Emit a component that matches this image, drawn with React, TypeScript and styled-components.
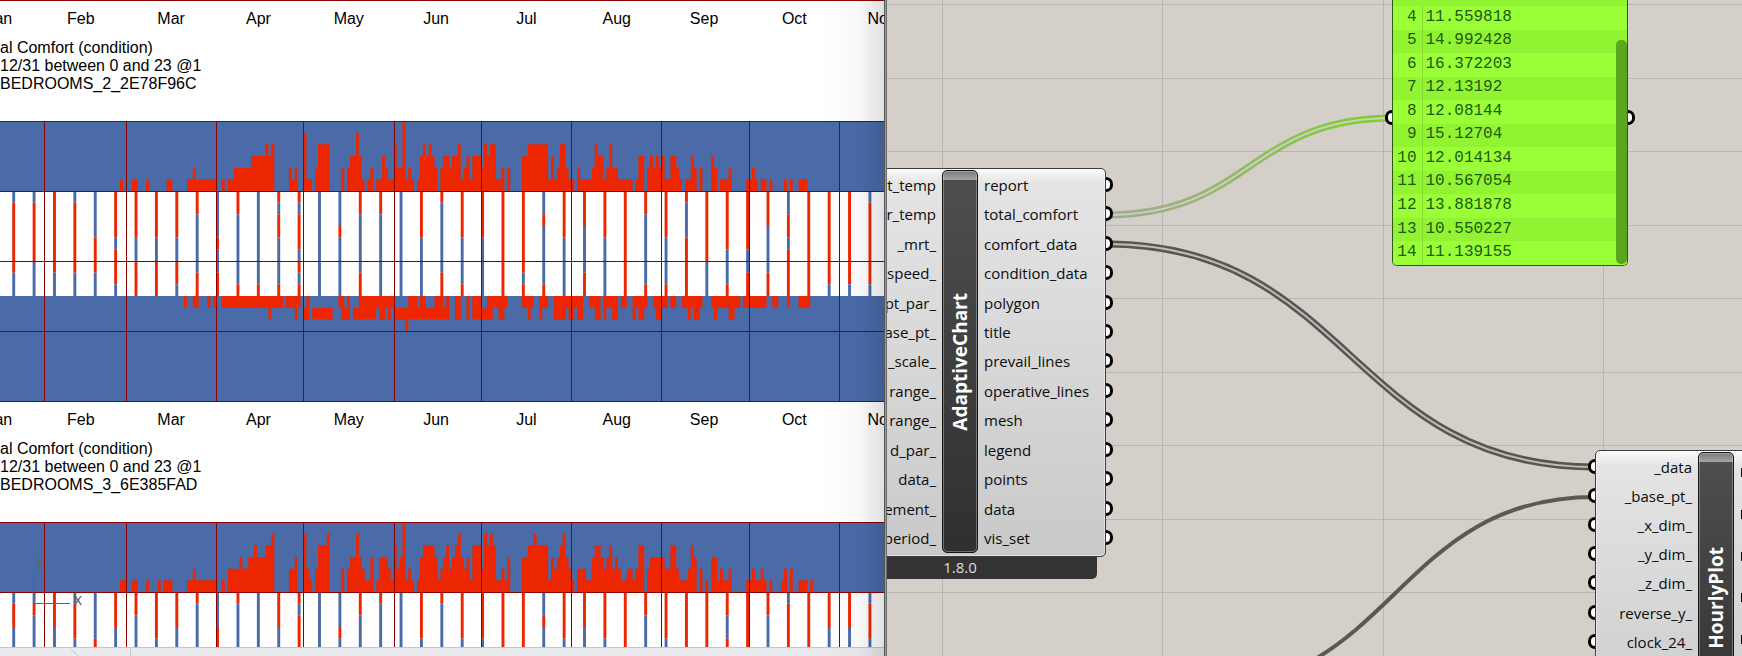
import React from "react";
import styled, { createGlobalStyle } from "styled-components";

const GlobalStyle = createGlobalStyle`
  * { box-sizing: border-box; }
  body { margin: 0; background: #d4cfc8; }
`;

const BLUE = "#4a6ba8";
const RED = "#eb2600";
const RULE = "#8b0000";

/* ---------- Rhino viewport: hourly comfort charts ---------- */

const YEAR_DAYS = 365;
const CHART_WIDTH = 1063;
const CHART_HEIGHT = 280;
const DAY = CHART_WIDTH / YEAR_DAYS;
const HOUR = CHART_HEIGHT / 24;
const MIDDAY_TOP = 6 * HOUR;
const MIDDAY_BOTTOM = 15 * HOUR;

const MONTHS: [string, number][] = [
  ["Jan", 31], ["Feb", 28], ["Mar", 31], ["Apr", 30], ["May", 31], ["Jun", 30],
  ["Jul", 31], ["Aug", 31], ["Sep", 30], ["Oct", 31], ["Nov", 30], ["Dec", 31],
];

/* A run starts on a day of the year; each digit is that day's count of red hours. */
type Run = [number, string];
/* First day and day after the last one. */
type Span = [number, number];

interface Room {
  id: string;
  morning: Run[];
  /* Hours 6 to 15, one string for each seventh day, starting on day 20. */
  weekly: string[];
  evening: Span[][];
}

const ROOM_2: Room = {
  id: "BEDROOMS_2_2E78F96C",
  morning: [
    [57, "1"], [61, "11"], [66, "1"], [73, "11"], [80, "1121111111"], [92, "1"],
    [94, "1122222233333434"], [115, "212"], [120, "511"], [124, "24444"], [133, "2"],
    [135, "233531"], [142, "12"], [145, "1132114226121"], [159, "1343432"],
    [167, "2332334123133324344112"], [190, "2"], [195, "334444444131244211"],
    [214, "2111124331242211111"], [234, "133"], [238, "232323113321"], [251, "1132"],
    [256, "2"], [260, "32"], [263, "1112"], [272, "1121"], [277, "11"], [280, "1"],
    [285, "1"], [287, "1"], [290, "111"],
  ],
  weekly: [
    "BRRRRRRBB", "BRRRRRBBB", "RRRRRRRBB", "BRRRRRRBB", "BBBBRRRBB", "RRRRBRRRB",
    "RRRRBBRRR", "RRRRBBRRR", "RRRRBBRRB", "RRBBBBBRR", "BBBBRBBRR", "RRBBBBBBR",
    "BBBBBBBBR", "RBRRBBBBR", "RBRRRBRBR", "BBBBBBBBB", "BBBRBBBBB", "RRBBBBBRR",
    "RRBBBBBBB", "BBBBBBBBB", "RRRRBBBBB", "RBBBBBBRR", "RRRRBBBBR", "RRRRBBBBB",
    "RRRRRRRRR", "RRRRRRRBR", "BBRBBBBBR", "RRRRBBBBB", "RRRBBBBRR", "RRRRBBBBB",
    "RRRRRRRRR", "RRBBBBBBR", "RRRRBBBBR", "RBBBRRRRR", "RRRRRRBBB", "RRRRRBBBR",
    "RRRRRBBRR", "RRRBBBBRR", "BBRRBRRRR", "RRRRRRRRR", "RRRRRRRRB", "RRRRRRRRB",
    "BRRRRRRRB",
  ],
  evening: [
    [
      [79, 80], [82, 84], [87, 88], [89, 90], [92, 113], [114, 119], [121, 122],
      [132, 134], [135, 136], [139, 151], [156, 159], [160, 162], [165, 168], [169, 170],
      [172, 174], [176, 177], [178, 181], [183, 190], [195, 199], [201, 204], [206, 216],
      [218, 222], [223, 228], [229, 231], [233, 238], [240, 245], [246, 248], [250, 257],
      [260, 270], [271, 279], [281, 283], [286, 287], [290, 294],
    ],
    [
      [108, 109], [117, 118], [120, 122], [123, 130], [133, 136], [137, 145], [146, 148],
      [149, 150], [151, 170], [172, 174], [176, 177], [178, 185], [187, 189], [197, 198],
      [201, 202], [206, 210], [211, 213], [214, 216], [220, 222], [223, 224], [226, 228],
      [233, 234], [235, 237], [241, 243], [252, 253], [254, 256], [261, 262], [266, 268],
    ],
    [[155, 156]],
  ],
};

const ROOM_3: Room = {
  id: "BEDROOMS_3_6E385FAD",
  morning: [
    [57, "11"], [61, "11"], [66, "1"], [70, "1"], [72, "111"], [80, "1121111111"], [92, "1"],
    [94, "2222322334333445"], [115, "223"], [120, "521"], [124, "24445"], [133, "2"],
    [135, "233532113"], [145, "1333214236121"], [159, "13444431234234532314442545411213"],
    [195, "334454444132345321"], [214, "22211344323423211221244"],
    [238, "23333322442111243"], [256, "2"], [258, "1"], [260, "3312112"],
    [272, "1121121"], [280, "1"], [284, "12"], [287, "2"], [290, "111"], [294, "1"],
  ],
  weekly: [
    "BRRBB", "BRBBB", "RRRBB", "BRRRB", "BBBBR", "RRRBB", "RRBBB", "RRRRB", "RRRBB",
    "RBBBB", "BBBRR", "RBBBB", "BBBBB", "RRRBB", "RBRRR", "BBBBB", "BBBRB", "RRBBB",
    "RBBBB", "BBBBB", "RRRRB", "RBBBB", "RRRRB", "RRRRB", "RRRRR", "RRRRR", "BBRBB",
    "RRRRB", "RRRBB", "RRRRB", "RRRRR", "RRBBB", "RRRRB", "RRRRR", "RRRRR", "RRBBR",
    "RRRRR", "RRBBB", "BRRRR", "RRRRR", "RRRBB", "RRRBB", "BRRRB",
  ],
  evening: [],
};

const Workspace = styled.main`
  display: grid;
  grid-template-columns: 884fr 3px 855fr;
  height: 100vh;
  min-height: 480px;
  overflow: hidden;
`;

const Viewport = styled.section`
  position: relative;
  display: flex;
  flex-direction: column;
  min-width: 0;
  overflow: hidden;
  background: #fff;
  font-family: "Liberation Sans", Arial, sans-serif;
  font-size: 16px;
  color: #000;
`;

const Scene = styled.div`
  flex: 1;
  min-height: 0;
  overflow: hidden;
  border-top: 1px solid ${RULE};
`;

const Shade = styled.div`
  position: absolute;
  inset: 0 0 0 auto;
  width: 60px;
  background: linear-gradient(to right, transparent, rgba(0, 0, 0, 0.03) 60%, rgba(0, 0, 0, 0.12));
`;

const ViewTabs = styled.footer`
  flex: none;
  display: flex;
  height: 9px;
  border-top: 1px solid #bcc6da;
  background: #eaebef;
`;

const Splitter = styled.div`
  background: linear-gradient(to right, #565656 1px, #9a9a9a 1px 2px, #6c6c6c 2px);
`;

const ChartHeader = styled.header`
  height: 120px;
`;

const MonthRow = styled.div`
  display: grid;
  grid-template-columns: ${MONTHS.map(([, days]) => `${days}fr`).join(" ")};
  width: ${CHART_WIDTH}px;
  margin-left: -46px;
  padding-top: 9px;
  line-height: 18px;
`;

const MonthCell = styled.div`
  display: flex;
  justify-content: flex-end;
  min-width: 0;
`;

const MonthName = styled.span`
  flex: none;
  width: 90px;
  text-align: center;
`;

const Caption = styled.p`
  margin: 11px 0 0;
  line-height: 18px;
  white-space: nowrap;
`;

const ChartDrawing = styled.svg`
  display: block;
  width: ${CHART_WIDTH}px;
  height: ${CHART_HEIGHT + 1}px;
  margin-left: -46px;
`;

/* Closed outline of one run of bars that stand on the 6 o'clock line. */
function skyline([start, hours]: Run) {
  const steps = hours
    .split("")
    .map((h, i) => `V${MIDDAY_TOP - Number(h) * HOUR}H${(start + i + 1) * DAY}`)
    .join("");
  return `M${start * DAY} ${MIDDAY_TOP}${steps}V${MIDDAY_TOP}Z`;
}

/* Groups equal neighbouring hours: "RRB" gives R from 0 for 2 hours, B from 2 for 1. */
function stretches(hours: string) {
  return Array.from(hours.matchAll(/R+|B+/g), (m) => ({
    from: m.index ?? 0,
    length: m[0].length,
    red: m[0][0] === "R",
  }));
}

function HourlyChart({ room }: { room: Room }) {
  let day = 0;
  const monthStarts = MONTHS.map(([, days]) => {
    const start = day;
    day += days;
    return start;
  });
  return (
    <ChartDrawing role="img" aria-label={`Hourly comfort, ${room.id}`}>
      <rect width={CHART_WIDTH} height={CHART_HEIGHT} fill={BLUE} />
      <rect y={MIDDAY_TOP} width={CHART_WIDTH} height={MIDDAY_BOTTOM - MIDDAY_TOP} fill="#fff" />
      {room.morning.map((run) => (
        <path key={run[0]} d={skyline(run)} fill={RED} />
      ))}
      {room.weekly.flatMap((hours, week) =>
        stretches(hours).map(({ from, length, red }) => (
          <rect
            key={`w${week}-${from}`}
            x={(20 + week * 7) * DAY}
            y={MIDDAY_TOP + from * HOUR}
            width={DAY}
            height={length * HOUR}
            fill={red ? RED : BLUE}
          />
        ))
      )}
      {room.evening.flatMap((spans, row) =>
        spans.map(([from, to]) => (
          <rect
            key={`e${row}-${from}`}
            x={from * DAY}
            y={MIDDAY_BOTTOM + row * HOUR}
            width={(to - from) * DAY}
            height={HOUR}
            fill={RED}
          />
        ))
      )}
      <g stroke={RULE} shapeRendering="crispEdges">
        {monthStarts.map((d) => {
          const x = Math.round(d * DAY - 0.2) + 0.5;
          return <line key={d} x1={x} x2={x} y1={0} y2={CHART_HEIGHT} />;
        })}
        {[0, 6, 12, 18, 24].map((h) => (
          <line key={h} x1={0} x2={CHART_WIDTH} y1={h * HOUR + 0.5} y2={h * HOUR + 0.5} />
        ))}
      </g>
    </ChartDrawing>
  );
}

function RoomChart({ room }: { room: Room }) {
  return (
    <article>
      <ChartHeader>
        <MonthRow>
          {MONTHS.map(([name]) => (
            <MonthCell key={name}>
              <MonthName>{name}</MonthName>
            </MonthCell>
          ))}
        </MonthRow>
        <Caption>
          al Comfort (condition)
          <br />
          12/31 between 0 and 23 @1
          <br />
          {room.id}
        </Caption>
      </ChartHeader>
      <HourlyChart room={room} />
    </article>
  );
}

const AxisOverlay = styled.div`
  position: absolute;
  left: 33px;
  bottom: 52px;
  width: 37px;
  height: 38px;
  border: solid #62626a;
  border-width: 0 0 1px 1px;
  color: #62626a;
`;

const AxisName = styled.span<{ $axis: "x" | "y" }>`
  position: absolute;
  line-height: 18px;
  ${({ $axis }) => ($axis === "x" ? "left: 40px; bottom: -6px;" : "left: 2px; top: -14px;")}
`;

/* ---------- Grasshopper canvas ---------- */

const Canvas = styled.section`
  position: relative;
  overflow: hidden;
  background: #d4cfc8;
  font-family: "Open Sans", "Segoe UI", "Noto Sans", sans-serif;
  font-size: 15px;
  color: #0c0c0c;
`;

const Backdrop = styled.svg`
  position: absolute;
  inset: 0;
  width: 100%;
  height: 100%;
`;

const Node = styled.div<{ $x: number; $y: number }>`
  position: absolute;
  left: ${({ $x }) => $x}px;
  top: ${({ $y }) => $y}px;
`;

const NodeBody = styled.div<{ $height: number }>`
  position: relative;
  display: flex;
  height: ${({ $height }) => $height}px;
  padding: 1px 0 3px;
  border: 1px solid #3c3c3c;
  border-radius: 5px;
  background: linear-gradient(to bottom, #fbfbfb, #e4e4e4 14px, #c9c9c9);
  box-shadow: inset 0 0 0 1px rgba(255, 255, 255, 0.4);
`;

const PortColumn = styled.ul<{ $side: "in" | "out"; $width: number; $rows: number }>`
  display: grid;
  grid-template-rows: repeat(${({ $rows }) => $rows}, 1fr);
  width: ${({ $width }) => $width}px;
  margin: 0;
  padding: 0 6px;
  list-style: none;
  text-align: ${({ $side }) => ($side === "in" ? "right" : "left")};
`;

const Port = styled.li`
  position: relative;
  display: grid;
  align-items: center;
  line-height: 20px;
  white-space: nowrap;
`;

const Grip = styled.i<{ $side: "in" | "out"; $inset: number }>`
  position: absolute;
  top: 50%;
  width: 7px;
  height: 15px;
  margin-top: -8px;
  border: 3px solid #000;
  background: #fff;
  ${({ $side, $inset }) =>
    $side === "in"
      ? `left: ${-7 - $inset}px; border-right: 0; border-radius: 8px 0 0 8px;`
      : `right: ${-7 - $inset}px; border-left: 0; border-radius: 0 8px 8px 0;`}
`;

const PanelGrip = styled(Grip)`
  top: 118px;
`;

const Capsule = styled.div`
  display: flex;
  align-items: center;
  justify-content: center;
  width: 36px;
  border: 1px solid #141414;
  border-radius: 5px;
  background: linear-gradient(to bottom, #7a7a7a, #a4a4a4 9px, #4e4e4e 9px, #2f2f2f);
  box-shadow: inset 0 0 0 1px rgba(255, 255, 255, 0.3);
`;

const CapsuleTitle = styled.h2`
  margin: 0;
  writing-mode: vertical-rl;
  transform: rotate(180deg);
  font-size: 19px;
  font-weight: 700;
  line-height: 24px;
  color: #fff;
`;

const VersionTag = styled.div`
  height: 22px;
  margin: 0 9px;
  border-radius: 0 0 5px 5px;
  background: #333;
  font-size: 15px;
  line-height: 20px;
  text-align: center;
  color: #dedede;
`;

const ClippedOutputs = styled.div`
  display: flex;
  flex-direction: column;
  justify-content: space-around;
  width: 60px;
  padding-left: 7px;
`;

const OutputTick = styled.i`
  width: 2px;
  height: 9px;
  background: #0c0c0c;
`;

const Panel = styled.div`
  position: absolute;
  left: 505px;
  top: 0;
  width: 236px;
`;

const PanelFace = styled.div`
  overflow: hidden;
  padding-top: 6px;
  border: 1px solid #2f5a16;
  border-top: 0;
  border-radius: 0 0 5px 5px;
  background: #92f333;
`;

const ValueTable = styled.table`
  width: 100%;
  height: 259px;
  border-collapse: collapse;
  font-family: "Liberation Mono", "Courier New", monospace;
  font-size: 16px;
  line-height: 18px;
  text-align: left;
  color: #1d5c12;
`;

const ValueRow = styled.tr`
  background: #92f333;
  &:nth-child(odd) { background: #9aff37; }
`;

const IndexCell = styled.th`
  width: 29px;
  padding: 0 5px 2px 0;
  border-right: 1px solid #84dc30;
  font-weight: 400;
  text-align: right;
`;

const ValueCell = styled.td`
  padding: 0 0 2px 3px;
`;

const ScrollThumb = styled.div`
  position: absolute;
  top: 40px;
  right: 1px;
  bottom: 2px;
  width: 11px;
  border-radius: 5px;
  background: #5aa61f;
`;

const VALUES: [number, string][] = [
  [4, "11.559818"], [5, "14.992428"], [6, "16.372203"], [7, "12.13192"], [8, "12.08144"],
  [9, "15.12704"], [10, "12.014134"], [11, "10.567054"], [12, "13.881878"],
  [13, "10.550227"], [14, "11.139155"],
];

const ADAPTIVE_IN = [
  "t_temp", "r_temp", "_mrt_", "speed_", "pt_par_", "ase_pt_", "_scale_", "range_",
  "range_", "d_par_", "data_", "ement_", "period_",
];
const ADAPTIVE_OUT = [
  "report", "total_comfort", "comfort_data", "condition_data", "polygon", "title",
  "prevail_lines", "operative_lines", "mesh", "legend", "points", "data", "vis_set",
];
const HOURLY_IN = [
  "_data", "_base_pt_", "_x_dim_", "_y_dim_", "_z_dim_", "reverse_y_", "clock_24_",
];

function wire(x1: number, y1: number, x2: number, y2: number) {
  const mid = (x1 + x2) / 2;
  return `M${x1} ${y1}C${mid} ${y1} ${mid} ${y2} ${x2} ${y2}`;
}

const TO_PANEL = wire(219, 215, 506, 118);
const TO_DATA = wire(219, 244, 708, 467);
const TO_BASE = wire(308, 690, 708, 497);

function CanvasBackdrop() {
  const columns = Array.from({ length: 10 }, (_, i) => Math.round(55 + i * 220.4) + 0.5);
  const rows = Array.from({ length: 20 }, (_, i) => Math.round(4 + i * 73.5) + 0.5);
  return (
    <Backdrop aria-hidden="true">
      <defs>
        <linearGradient id="selected" gradientUnits="userSpaceOnUse" x1="219" y1="0" x2="506" y2="0">
          <stop offset="0" stopColor="#a3a795" />
          <stop offset="0.45" stopColor="#95b868" />
          <stop offset="0.8" stopColor="#84cc38" />
          <stop offset="1" stopColor="#7fce2c" />
        </linearGradient>
      </defs>
      <g stroke="#b9b5af">
        {columns.map((x) => <line key={x} x1={x} x2={x} y1="0" y2="100%" />)}
        {rows.map((y) => <line key={y} y1={y} y2={y} x1="0" x2="100%" />)}
      </g>
      <g fill="none">
        <path d={TO_PANEL} stroke="url(#selected)" strokeWidth="7" />
        <path d={TO_PANEL} stroke="#ccd0c0" strokeWidth="2" />
        <path d={TO_DATA} stroke="#575652" strokeWidth="7" />
        <path d={TO_DATA} stroke="#c0bcb5" strokeWidth="2" />
        <path d={TO_BASE} stroke="#5a5955" strokeWidth="4" />
      </g>
    </Backdrop>
  );
}

interface PortsProps {
  side: "in" | "out";
  names: string[];
  width: number;
  rows: number;
}

function Ports({ side, names, width, rows }: PortsProps) {
  return (
    <PortColumn $side={side} $width={width} $rows={rows}>
      {names.map((name, i) => (
        <Port key={i}>
          {name}
          <Grip $side={side} $inset={7} />
        </Port>
      ))}
    </PortColumn>
  );
}

export default function App() {
  return (
    <>
      <GlobalStyle />
      <Workspace>
        <Viewport>
          <Scene>
            <RoomChart room={ROOM_2} />
            <RoomChart room={ROOM_3} />
          </Scene>
          <ViewTabs>
            <svg width="132" height="8" aria-hidden="true" fill="none" stroke="#bcc6da">
              <path d="M71 1l8 8M130.500 1v8" />
            </svg>
          </ViewTabs>
          <AxisOverlay>
            <AxisName $axis="y">y</AxisName>
            <AxisName $axis="x">x</AxisName>
          </AxisOverlay>
          <Shade />
        </Viewport>
        <Splitter />
        <Canvas>
          <CanvasBackdrop />
          <Node $x={-73} $y={168}>
            <NodeBody $height={389}>
              <Ports side="in" names={ADAPTIVE_IN} width={127} rows={13} />
              <Capsule>
                <CapsuleTitle>AdaptiveChart</CapsuleTitle>
              </Capsule>
              <Ports side="out" names={ADAPTIVE_OUT} width={127} rows={13} />
            </NodeBody>
            <VersionTag>1.8.0</VersionTag>
          </Node>
          <Node $x={708} $y={450}>
            <NodeBody $height={298}>
              <Ports side="in" names={HOURLY_IN} width={102} rows={10} />
              <Capsule>
                <CapsuleTitle>HourlyPlot</CapsuleTitle>
              </Capsule>
              <ClippedOutputs>
                {Array.from({ length: 7 }, (_, i) => <OutputTick key={i} />)}
              </ClippedOutputs>
            </NodeBody>
          </Node>
          <Panel>
            <PanelFace>
              <ValueTable>
                <tbody>
                  {VALUES.map(([index, value]) => (
                    <ValueRow key={index}>
                      <IndexCell scope="row">{index}</IndexCell>
                      <ValueCell>{value}</ValueCell>
                    </ValueRow>
                  ))}
                </tbody>
              </ValueTable>
            </PanelFace>
            <ScrollThumb />
            <PanelGrip $side="in" $inset={0} />
            <PanelGrip $side="out" $inset={0} />
          </Panel>
        </Canvas>
      </Workspace>
    </>
  );
}
